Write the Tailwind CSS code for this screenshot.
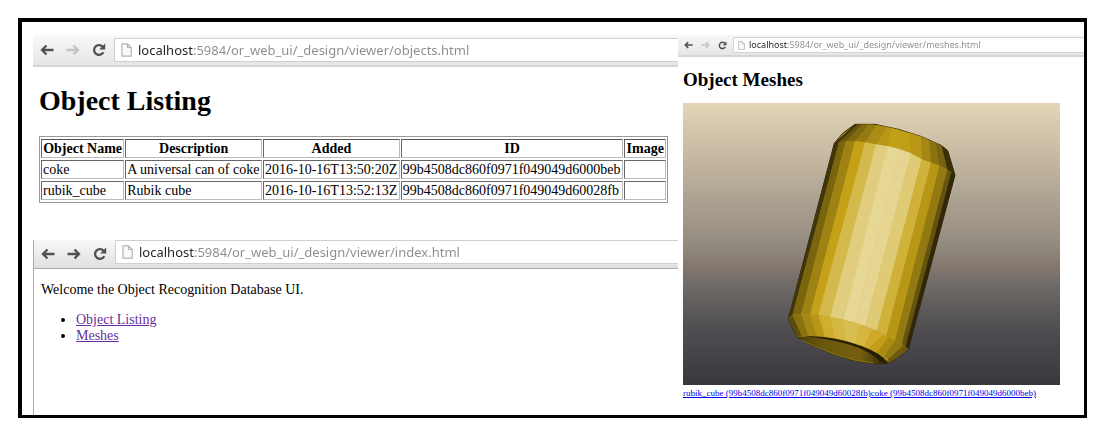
<!DOCTYPE html>
<html lang="en">
<head>
<meta charset="utf-8">
<title>Object Recognition Database UI</title>
<script src="https://cdn.jsdelivr.net/npm/@tailwindcss/browser@4"></script>
</head>
<body class="bg-white p-[18px] pr-5 pb-2 font-['Liberation_Serif',serif] text-sm text-black">
<svg class="hidden">
  <symbol id="back" viewBox="0 0 14 12"><path d="M13.500 6H2.500M6.500 1.500L2 6L6.500 10.500" fill="none" stroke="currentColor" stroke-width="2.300"/></symbol>
  <symbol id="forward" viewBox="0 0 14 12"><path d="M.5 6H11.500M7.500 1.500L12 6L7.500 10.500" fill="none" stroke="currentColor" stroke-width="2.300"/></symbol>
  <symbol id="reload" viewBox="0 0 14 14"><path d="M11.300 9.300A4.900 4.900 0 1 1 10.600 3.600" fill="none" stroke="currentColor" stroke-width="2.300"/><path d="M13.200 .6V6.600H7.200Z" fill="currentColor"/></symbol>
  <symbol id="page" viewBox="0 0 11 14"><path d="M1 .8H6.500L10.200 4.500V13.200H1ZM6.500 .8V4.500H10.200" fill="#fafafa" stroke="#b4b4b4" stroke-width="1.200"/></symbol>
</svg>

<main class="grid grid-cols-[656fr_406fr] border-4 border-b-3 border-r-3 border-black">
  <div class="flex flex-col pt-[13px] pl-[11px]">
    <section>
      <div class="flex h-8 items-center border-b-2 border-[#d6d6d6] bg-linear-to-b from-[#f8f8f8] to-[#e6e6e6] pl-[7px]">
        <button aria-label="Back" class="mr-3 text-[#505050]"><svg class="h-3 w-3.5"><use href="#back"/></svg></button>
        <button aria-label="Forward" class="mr-3 text-[#c4c4c4]"><svg class="h-3 w-3.5"><use href="#forward"/></svg></button>
        <button aria-label="Reload" class="mr-2 text-[#505050]"><svg class="size-3.5"><use href="#reload"/></svg></button>
        <div class="flex h-6 grow items-center gap-1.5 rounded-l-xs border border-r-0 border-[#cfcfcf] bg-white pl-1.5">
          <svg class="h-3.5 w-[11px] shrink-0"><use href="#page"/></svg>
          <input aria-label="Address" value="localhost:5984/or_web_ui/_design/viewer/objects.html" class="min-w-0 grow bg-linear-to-r from-[#222] from-[56px] to-[#8c8c8c] to-[56px] bg-clip-text font-['Noto_Sans',sans-serif] text-[13px] leading-5 text-transparent">
        </div>
      </div>
      <div class="px-1.5 pt-[18px]">
        <h1 class="text-[28px] leading-8 font-bold">Object Listing</h1>
        <table class="mt-[19px] w-[629px] border-separate border-spacing-x-[1px] border-spacing-y-[2px] border border-[#999] leading-[15px] whitespace-nowrap [&_td]:border [&_td]:border-[#bbb] [&_td]:border-t-[#666] [&_td]:border-l-[#666] [&_td]:p-px [&_th]:border [&_th]:border-[#bbb] [&_th]:border-t-[#555] [&_th]:border-l-[#666] [&_th]:p-px">
          <thead><tr><th>Object Name</th><th>Description</th><th>Added</th><th>ID</th><th>Image</th></tr></thead>
          <tbody>
            <tr><td>coke</td><td>A universal can of coke</td><td>2016-10-16T13:50:20Z</td><td>99b4508dc860f0971f049049d6000beb</td><td></td></tr>
            <tr><td>rubik_cube</td><td>Rubik cube</td><td>2016-10-16T13:52:13Z</td><td>99b4508dc860f0971f049049d60028fb</td><td></td></tr>
          </tbody>
        </table>
      </div>
    </section>

    <section class="mt-[37px] grow border-l border-[#aaa]">
      <div class="flex h-[29px] items-center border-b border-[#aaa] bg-linear-to-b from-[#f8f8f8] to-[#e0e0e0] pl-[7px]">
        <button aria-label="Back" class="mr-3 text-[#505050]"><svg class="h-3 w-3.5"><use href="#back"/></svg></button>
        <button aria-label="Forward" class="mr-3 text-[#505050]"><svg class="h-3 w-3.5"><use href="#forward"/></svg></button>
        <button aria-label="Reload" class="mr-2 text-[#505050]"><svg class="size-3.5"><use href="#reload"/></svg></button>
        <div class="mb-1 flex h-6 grow items-center gap-1.5 rounded-l-xs border border-r-0 border-[#cfcfcf] bg-white pl-1.5">
          <svg class="h-3.5 w-[11px] shrink-0"><use href="#page"/></svg>
          <input aria-label="Address" value="localhost:5984/or_web_ui/_design/viewer/index.html" class="min-w-0 grow bg-linear-to-r from-[#222] from-[56px] to-[#8c8c8c] to-[56px] bg-clip-text font-['Noto_Sans',sans-serif] text-[13px] leading-5 text-transparent">
        </div>
      </div>
      <div class="px-[7px] pt-[13px] leading-4">
        <p>Welcome the Object Recognition Database UI.</p>
        <ul class="mt-3.5 list-disc pl-[35px] text-black">
          <li><a href="#objects" class="text-[#6a2f9c] underline">Object Listing</a></li>
          <li><a href="#meshes" class="text-[#6a2f9c] underline">Meshes</a></li>
        </ul>
      </div>
    </section>
  </div>

  <section class="pt-[13px] pb-4">
    <div class="flex h-[22px] items-center border-b-2 border-[#d6d6d6] bg-linear-to-b from-[#f8f8f8] to-[#e6e6e6] pl-1.5">
      <button aria-label="Back" class="mr-2 text-[#505050]"><svg class="h-2 w-[9px]"><use href="#back"/></svg></button>
      <button aria-label="Forward" class="mr-2 text-[#c4c4c4]"><svg class="h-2 w-[9px]"><use href="#forward"/></svg></button>
      <button aria-label="Reload" class="mr-1.5 text-[#505050]"><svg class="size-[9px]"><use href="#reload"/></svg></button>
      <div class="flex h-4 grow items-center gap-1 rounded-l-xs border border-r-0 border-[#d4d4d4] bg-white pl-1">
        <svg class="h-[9px] w-[7px] shrink-0"><use href="#page"/></svg>
        <input aria-label="Address" value="localhost:5984/or_web_ui/_design/viewer/meshes.html" class="min-w-0 grow bg-linear-to-r from-[#222] from-[39px] to-[#8c8c8c] to-[39px] bg-clip-text font-['Noto_Sans',sans-serif] text-[9px] leading-3.5 text-transparent">
      </div>
    </div>
    <div class="pr-6 pl-[5px]">
      <h2 class="pt-3 text-[19px] leading-[22px] font-bold">Object Meshes</h2>
      <svg viewBox="0 0 377 282" role="img" aria-label="Mesh of a can" class="mt-3 w-full">
        <defs>
          <linearGradient id="backdrop" x1="0" y1="0" x2="0" y2="1">
            <stop offset="0" stop-color="#e4d5b7"/><stop offset=".5" stop-color="#938b80"/><stop offset=".57" stop-color="#857a71"/><stop offset=".64" stop-color="#716b67"/><stop offset=".8" stop-color="#504e51"/><stop offset="1" stop-color="#38373e"/>
          </linearGradient>
          <linearGradient id="hollow" x1="0" x2="1"><stop offset="0" stop-color="#4a3d0a"/><stop offset=".3" stop-color="#6b580e"/><stop offset=".7" stop-color="#755f0e"/><stop offset="1" stop-color="#2b2305"/></linearGradient>
        </defs>
        <rect width="377" height="282" fill="url(#backdrop)"/>
        <g transform="translate(92 7) scale(.33333)">
          <path d="M240 43L300 43L370 58L440 80L500 107L518 122L540 195L400 718L365 745L340 760L300 761L240 752L180 735L110 705L65 680L40 628L178 100L205 68Z" fill="#b19215" stroke="#2b2305" stroke-width="3"/>
          <path fill="#3b3008" d="M240 43L250 43L194 97L178 100Z"/>
          <path fill="#66540d" d="M248 43L264 43L213 95L190 97Z"/>
          <path fill="#806a10" d="M262 43L284 43L242 94L211 95Z"/>
          <path fill="#947a11" d="M282 43L308 45L272 97L240 93Z"/>
          <path fill="#ab8c14" d="M306 45L340 51L305 103L270 97Z"/>
          <path fill="#b99816" d="M338 51L372 59L340 107L303 103Z"/>
          <path fill="#c1a018" d="M350 54L405 69L408 130L338 107Z"/>
          <path fill="#b99815" d="M403 68L440 80L442 148L406 130Z"/>
          <path fill="#a58813" d="M438 79L464 91L470 158L440 147Z"/>
          <path fill="#8b7311" d="M462 90L484 99L495 168L468 158Z"/>
          <path fill="#766210" d="M482 98L502 108L519 179L493 168Z"/>
          <path fill="#3b3008" d="M500 107L518 122L540 195L517 179Z"/>

          <path fill="#40350a" d="M178 100L193 95L53 615L40 625Z"/>
          <path fill="#7a650f" d="M192 95L213 94L79 612L52 615Z"/>
          <path fill="#9e8213" d="M212 94L241 93L106 613L78 612Z"/>
          <path fill="#c5a117" d="M240 93L271 97L131 615L105 613Z"/>
          <path fill="#d4ba4c" d="M270 97L304 103L166 621L130 615Z"/>
          <path fill="#e0cd7e" d="M303 103L339 108L206 629L165 621Z"/>
          <path fill="#e7d795" d="M338 108L376 118L241 639L205 629Z"/>
          <path fill="#e6d590" d="M375 118L409 130L271 649L240 639Z"/>
          <path fill="#dfca75" d="M408 130L441 148L306 664L270 649Z"/>
          <path fill="#d0b23b" d="M440 148L469 158L334 680L305 664Z"/>
          <path fill="#b99716" d="M468 158L494 168L361 692L333 680Z"/>
          <path fill="#937911" d="M493 168L518 179L381 703L360 692Z"/>
          <path fill="#655410" d="M517 179L530 188L392 711L380 703Z"/>
          <path fill="#30270a" d="M529 187L540 195L400 718L391 711Z"/>

          <path fill="#5c4c0d" d="M40 628L53 615L85 678L65 680Z"/>
          <path fill="#8a7211" d="M52 615L79 612L105 677L80 678Z"/>
          <path fill="#a68914" d="M78 612L106 613L130 678L100 677Z"/>
          <path fill="#b99716" d="M105 613L132 615L155 680L125 678Z"/>
          <path fill="#d0ad2b" d="M130 615L167 621L182 685L150 680Z"/>
          <path fill="#d5b744" d="M165 621L207 629L214 692L180 685Z"/>
          <path fill="#d8be52" d="M205 629L256 643L242 702L212 692Z"/>
          <path fill="#d6b641" d="M254 643L292 658L268 711L240 702Z"/>
          <path fill="#ceaa28" d="M290 658L334 680L290 721L266 711Z"/>
          <path fill="#c29e18" d="M325 674L350 688L310 732L280 716Z"/>
          <path fill="#aa8b14" d="M340 682L362 693L332 744L305 730Z"/>
          <path fill="#947a12" d="M360 692L388 707L348 752L327 741Z"/>
          <path fill="#6b590e" d="M385 706L400 718L365 745L340 760L335 752Z"/>

          <path fill="url(#hollow)" d="M65 680Q160 672 260 708Q315 728 340 760L300 761L240 752L180 735L110 705Z"/>
          <path fill="#251e04" d="M90 679Q170 676 260 709Q322 733 337 757L316 756Q290 724 225 704Q160 686 90 679Z"/>
          <path fill="none" stroke="#85700f" stroke-width="3" d="M80 690L115 706L182 734L240 750L295 759"/>
        </g>
      </svg>
      <p class="mt-0.5 text-[9px] leading-3 whitespace-nowrap text-[#0000ee]"><a href="#rubik_cube" class="underline">rubik_cube (99b4508dc860f0971f049049d60028fb)</a><a href="#coke" class="underline">coke (99b4508dc860f0971f049049d6000beb)</a></p>
    </div>
  </section>
</main>
</body>
</html>
